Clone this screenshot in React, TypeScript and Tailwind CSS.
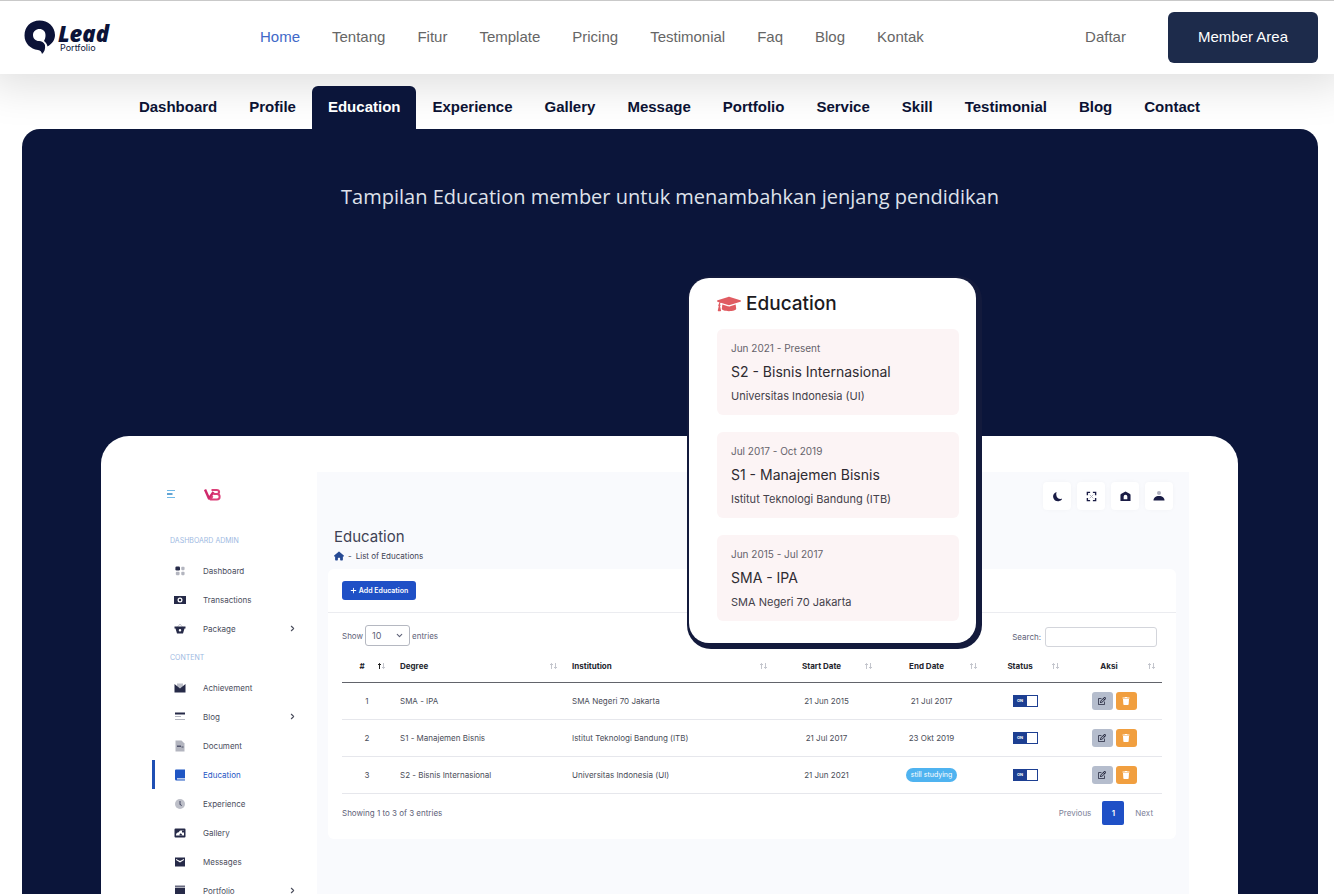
import { useState, type ReactNode } from 'react';
import { FaGraduationCap, FaTrash } from 'react-icons/fa';
import { FaHouse, FaMoon, FaPlus, FaRegPenToSquare } from 'react-icons/fa6';
import { ChevronDown, ChevronRight } from 'lucide-react';
import clsx from 'clsx';

const NAV = ['Home', 'Tentang', 'Fitur', 'Template', 'Pricing', 'Testimonial', 'Faq', 'Blog', 'Kontak'];

const TABS = [
  'Dashboard', 'Profile', 'Education', 'Experience', 'Gallery', 'Message',
  'Portfolio', 'Service', 'Skill', 'Testimonial', 'Blog', 'Contact',
];

const EDUCATION = [
  { date: 'Jun 2021 - Present', title: 'S2 - Bisnis Internasional', place: 'Universitas Indonesia (UI)' },
  { date: 'Jul 2017 - Oct 2019', title: 'S1 - Manajemen Bisnis', place: 'Istitut Teknologi Bandung (ITB)' },
  { date: 'Jun 2015 - Jul 2017', title: 'SMA - IPA', place: 'SMA Negeri 70 Jakarta' },
];

const ROWS = [
  { id: 1, degree: 'SMA - IPA', institution: 'SMA Negeri 70 Jakarta', start: '21 Jun 2015', end: '21 Jul 2017' },
  { id: 2, degree: 'S1 - Manajemen Bisnis', institution: 'Istitut Teknologi Bandung (ITB)', start: '21 Jul 2017', end: '23 Okt 2019' },
  { id: 3, degree: 'S2 - Bisnis Internasional', institution: 'Universitas Indonesia (UI)', start: '21 Jun 2021', end: null },
];

const COLUMNS = [
  { label: '#', width: 'w-[50px]', center: true, sorted: true },
  { label: 'Degree', width: 'w-[172px]' },
  { label: 'Institution', width: 'w-auto' },
  { label: 'Start Date', width: 'w-[105px]', center: true },
  { label: 'End Date', width: 'w-[105px]', center: true },
  { label: 'Status', width: 'w-[82px]', center: true },
  { label: 'Aksi', width: 'w-[96px]', center: true },
];

function Icon({ children, className = 'size-3' }: { children: ReactNode; className?: string }) {
  return (
    <svg viewBox="0 0 24 24" fill="currentColor" className={className} aria-hidden="true">
      {children}
    </svg>
  );
}

const icons: Record<string, ReactNode> = {
  Dashboard: (
    <Icon className="size-[10px]">
      <rect x="1" y="1" width="11" height="10" rx="3" />
      <rect x="15" y="2" width="8" height="8" rx="2" opacity=".35" />
      <rect x="2" y="14" width="9" height="8" rx="2" opacity=".35" />
      <rect x="15" y="14" width="8" height="8" rx="2" opacity=".35" />
    </Icon>
  ),
  Transactions: (
    <Icon>
      <path fillRule="evenodd" d="M0 4h24v16H0zM12 7a5 5 0 1 0 0 10 5 5 0 0 0 0-10z" />
      <circle cx="12" cy="12" r="2.5" />
    </Icon>
  ),
  Package: (
    <Icon>
      <path d="M6 9 12 2l6 7" fill="none" stroke="currentColor" strokeWidth="1.5" opacity=".35" />
      <path fillRule="evenodd" d="M1 7h22v4h-2l-3 10H6L3 11H1zM12 12a2.500 2.500 0 1 0 0 5 2.500 2.500 0 0 0 0-5z" />
    </Icon>
  ),
  Achievement: (
    <Icon>
      <path d="M6 3h12v7l-6 5-6-5z" opacity=".3" />
      <path d="m1 4 11 9 11-9v17H1z" />
    </Icon>
  ),
  Blog: (
    <Icon>
      <rect x="2" y="3" width="20" height="4" />
      <rect x="2" y="10" width="12" height="2" opacity=".35" />
      <rect x="2" y="16" width="20" height="2" opacity=".35" />
    </Icon>
  ),
  Document: (
    <Icon>
      <path d="M3 1h12l6 6v16H3z" opacity=".35" />
      <path d="M6 11h8v3H6zM15 13h4v2h-4z" opacity=".7" />
    </Icon>
  ),
  Education: (
    <Icon>
      <path fillRule="evenodd" d="M4 1h18v17H6v3h16v2H5a3 3 0 0 1-3-3V3a2 2 0 0 1 2-2z" />
      <path d="M6 18h16v3H6z" opacity=".3" />
    </Icon>
  ),
  Experience: (
    <Icon>
      <circle cx="12" cy="12" r="10" opacity=".3" />
      <path d="M11 6h2v6l3 3-1 1-4-3z" opacity=".8" />
    </Icon>
  ),
  Gallery: (
    <Icon>
      <path fillRule="evenodd" d="M3 3h18a2 2 0 0 1 2 2v14a2 2 0 0 1-2 2H3a2 2 0 0 1-2-2V5a2 2 0 0 1 2-2zm10 4c-2 0-3 4-5 4-3 0-4 3-4 6h16V7z" />
      <path d="M11 17c0-4 2-5 4-3l2 3zM16 7h5v4h-5z" />
    </Icon>
  ),
  Messages: (
    <Icon>
      <path fillRule="evenodd" d="M2 3h20v18H2zm2 3v2l8 5 8-5V6l-8 4z" />
    </Icon>
  ),
  Portfolio: (
    <Icon>
      <path d="M2 6h20v17H2z" />
      <path d="M2 1h20v4H2z" opacity=".7" />
    </Icon>
  ),
};

function SideItem({ label, active, expandable }: { label: string; active?: boolean; expandable?: boolean }) {
  return (
    <li>
      <a
        href="#"
        className={clsx(
          'flex h-[29px] items-center border-l-[3px] pr-5 pl-[18px]',
          active ? 'border-[#1f4fb4] text-[#1f56c4]' : 'border-transparent text-[#4a4d5c]'
        )}
      >
        <span className={clsx('mr-4 flex w-[14px] justify-center', !active && 'text-[#262a48]')}>{icons[label]}</span>
        {label}
        {expandable && <ChevronRight className="ml-auto size-[9px]" strokeWidth={3} />}
      </a>
    </li>
  );
}

function SortIcon({ sorted }: { sorted?: boolean }) {
  return (
    <svg viewBox="0 0 18 14" fill="none" strokeWidth="2" className="absolute top-1/2 right-[6px] h-[7px] w-[9px] -translate-y-1/2" aria-hidden="true">
      <path d="M5 13V2M2 5l3-3 3 3" className={sorted ? 'stroke-[#222]' : 'stroke-[#c3c5cc]'} />
      <path d="M13 1v11M10 9l3 3 3-3" className="stroke-[#c3c5cc]" />
    </svg>
  );
}

function Logo() {
  return (
    <a href="#" className="flex w-[94px] items-center gap-[3px] text-[#0c1338]">
      <svg viewBox="0 0 62 70" className="ml-[2px] h-[35px] w-[31px] shrink-0" aria-hidden="true">
        <path
          fill="currentColor"
          d="M31 1C13 1 1 14 1 31c0 16 12 27 27 29 5 1 7 3 8 8 5-4 7-10 6-18-2-5-7-8-12-8-7 0-12-5-12-12s6-12 13-12 12 5 12 12c0 5-1 8-3 12 4 3 6 6 7 11 9-5 15-13 15-23C62 13 48 1 31 1z"
        />
      </svg>
      <span className="flex flex-col">
        <span className="font-['Open_Sans'] text-[22px] leading-5 font-extrabold italic">Lead</span>
        <span className="pl-[2px] font-['Inter'] text-[9px] leading-[10px]">Portfolio</span>
      </span>
    </a>
  );
}

function Header() {
  return (
    <header className="relative z-10 flex h-[74px] shrink-0 items-center border-t border-[#c9c9c9] bg-white pr-4 pl-[22px] text-[15px] text-[#666] shadow-[0_0_44px_12px_rgba(0,0,0,0.13)]">
      <Logo />
      <nav className="ml-32 flex">
        {NAV.map((item) => (
          <a key={item} href="#" className={clsx('px-4', item === 'Home' && 'text-[#4169c8]')}>
            {item}
          </a>
        ))}
      </nav>
      <a href="#" className="ml-auto">Daftar</a>
      <button className="ml-[42px] h-[51px] rounded-md bg-[#1d2b4b] px-[30px] text-white">Member Area</button>
    </header>
  );
}

function EducationCard() {
  return (
    <aside className="absolute -top-[158px] right-[262px] z-10 w-[287px] rounded-[20px] bg-white px-[17px] pt-[13px] pb-[22px] pl-7 text-[#2e2b31] shadow-[2px_2px_0_4px_#131a3c]">
      <h2 className="mb-3 flex h-[26px] items-center gap-[5px] text-[19px] font-medium text-[#1c1a20]">
        <FaGraduationCap className="size-6 text-[#e05c62]" />
        Education
      </h2>
      <ul className="space-y-[17px]">
        {EDUCATION.map((item) => (
          <li key={item.title} className="rounded-md bg-[#fcf4f5] px-[14px] py-[7px] leading-6">
            <p className="text-[10px] text-[#66636b]">{item.date}</p>
            <h3 className="text-[14px]">{item.title}</h3>
            <p className="text-[11px] text-[#44414a]">{item.place}</p>
          </li>
        ))}
      </ul>
    </aside>
  );
}

function Sidebar() {
  return (
    <div className="w-[165px] shrink-0 bg-white">
      <div className="flex h-11 items-center pl-[14px]">
        <svg viewBox="0 0 20 20" className="size-[10px]" aria-hidden="true">
          <path d="M2 3h16M2 17h16" stroke="#6fb9e8" strokeWidth="2" />
          <path d="M2 10h11" stroke="#2f86c4" strokeWidth="3" />
        </svg>
        <svg viewBox="0 0 34 26" className="ml-7 h-[13px] w-[17px]" fill="none" strokeWidth="5" strokeLinejoin="round" aria-hidden="true">
          <path d="m2 3 8 18L19 8" stroke="#cf2a6c" />
          <path d="M15 4h10c7 0 7 8 0 8h-5 6c7 0 7 11 0 11H13l4-7" stroke="#dc3f78" strokeWidth="4" />
        </svg>
      </div>
      <h4 className="mt-[9px] flex h-[31px] items-center pl-[18px] text-[7px] text-[#9db9e2]">DASHBOARD ADMIN</h4>
      <ul>
        <SideItem label="Dashboard" />
        <SideItem label="Transactions" />
        <SideItem label="Package" expandable />
      </ul>
      <h4 className="flex h-[30px] items-center pl-[18px] text-[7px] text-[#9db9e2]">CONTENT</h4>
      <ul>
        <SideItem label="Achievement" />
        <SideItem label="Blog" expandable />
        <SideItem label="Document" />
        <SideItem label="Education" active />
        <SideItem label="Experience" />
        <SideItem label="Gallery" />
        <SideItem label="Messages" />
        <SideItem label="Portfolio" expandable />
      </ul>
    </div>
  );
}

function Toggle({ id }: { id: number }) {
  const [on, setOn] = useState(true);

  return (
    <label className="inline-flex h-3 w-[25px] items-center bg-[#1d3f92] p-px align-middle">
      <input type="checkbox" checked={on} onChange={() => setOn(!on)} className="sr-only" aria-label={`Status ${id}`} />
      <span className="w-[13px] text-center text-[4px] font-bold text-white">{on ? 'ON' : 'OFF'}</span>
      <span className="h-[10px] flex-1 bg-white" />
    </label>
  );
}

function Topbar() {
  const button = 'flex size-7 items-center justify-center rounded bg-white text-[#1a1c45] shadow-[0_0_4px_rgba(0,0,0,0.03)]';

  return (
    <div className="flex justify-end gap-[6px] pt-[10px] pr-4">
      <button className={button} aria-label="Dark mode">
        <Icon className="size-[11px]">
          <path d="M10 2C4 4 1 9 3 15c2 7 11 10 18 4l1-2c-9 2-15-5-12-15z" />
        </Icon>
      </button>
      <button className={button} aria-label="Fullscreen">
        <Icon className="size-[11px]">
          <path d="M3 9V3h6M15 3h6v6M21 15v6h-6M9 21H3v-6" fill="none" stroke="currentColor" strokeWidth="3" />
          <path d="m8 8 8 8M16 8l-8 8" stroke="currentColor" strokeWidth="2" opacity=".35" />
        </Icon>
      </button>
      <button className={button} aria-label="Home">
        <Icon className="size-[11px]">
          <path fillRule="evenodd" d="M12 1 3 6a3 3 0 0 0-2 3v13h22V9a3 3 0 0 0-2-3zM8 12v6h8v-6a4 4 0 0 0-8 0z" />
        </Icon>
      </button>
      <button className={button} aria-label="Account">
        <Icon>
          <circle cx="12" cy="6" r="4" opacity=".35" />
          <path d="M1 21c0-5 4-9 11-9s11 4 11 9z" />
        </Icon>
      </button>
    </div>
  );
}

function EducationTable() {
  return (
    <table className="mt-[4px] w-full table-fixed text-[8px] text-[#4a4d58]">
      <thead>
        <tr className="h-[31px] border-b border-[#62646b] text-[#25262e]">
          {COLUMNS.map((col) => (
            <th
              key={col.label}
              className={clsx('relative pr-[18px] pl-2 font-bold', col.width, col.center ? 'text-center' : 'text-left')}
            >
              {col.label}
              <SortIcon sorted={col.sorted} />
            </th>
          ))}
        </tr>
      </thead>
      <tbody>
        {ROWS.map((row) => (
          <tr key={row.id} className="h-[37px] border-b border-[#e6e7ec]">
            <td className="text-center">{row.id}</td>
            <td className="px-2">{row.degree}</td>
            <td className="px-2">{row.institution}</td>
            <td className="text-center">{row.start}</td>
            <td className="text-center">
              {row.end ?? (
                <span className="inline-block rounded-full bg-[#4fb3f0] px-[5px] text-[7px] leading-[14px] text-white">still studying</span>
              )}
            </td>
            <td className="text-center">
              <Toggle id={row.id} />
            </td>
            <td>
              <div className="flex justify-center gap-[3px]">
                <button className="flex h-[18px] w-[21px] items-center justify-center rounded-[3px] bg-[#b5bdcd] text-[#23263c]" aria-label="Edit">
                  <FaRegPenToSquare className="size-2" />
                </button>
                <button className="flex h-[18px] w-[21px] items-center justify-center rounded-[3px] bg-[#f19f3f] text-white" aria-label="Delete">
                  <FaTrash className="size-2" />
                </button>
              </div>
            </td>
          </tr>
        ))}
      </tbody>
    </table>
  );
}

function Content() {
  return (
    <main className="flex-1 bg-[#f9fafd]">
      <Topbar />
      <div className="px-[11px] pr-[13px]">
        <div className="px-[6px] pt-4">
          <h1 className="text-[15px] leading-[22px] text-[#3f4254]">Education</h1>
          <div className="flex h-4 items-center gap-1 text-[#3f4254]">
            <FaHouse className="size-[10px] text-[#274a94]" />
            <span>-</span>
            <span>List of Educations</span>
          </div>
        </div>

        <div className="mt-[5px] rounded-md bg-white">
          <div className="h-11 border-b border-[#ebecf0] px-[14px] pt-3">
            <button className="flex h-[19px] w-[74px] items-center justify-center gap-[2px] rounded-[3px] bg-[#1f50c6] text-[7px] font-semibold text-white">
              <FaPlus className="size-[7px]" />
              Add Education
            </button>
          </div>

          <div className="px-[14px] pt-[11px] pb-[14px] text-[#5e6278]">
            <div className="flex items-center justify-between pr-[5px]">
              <label className="flex items-center gap-[2px]">
                Show
                <span className="relative">
                  <select className="h-[21px] w-[45px] appearance-none rounded-[3px] border border-[#b5b8c1] bg-white pl-[6px] text-[9px]">
                    <option>10</option>
                    <option>25</option>
                  </select>
                  <ChevronDown className="pointer-events-none absolute top-[6px] right-[6px] size-[9px]" strokeWidth={3} />
                </span>
                entries
              </label>
              <label className="flex items-center gap-1 pt-[3px]">
                Search:
                <input type="search" className="h-5 w-28 rounded-[3px] border border-[#d3d5db] bg-white px-1" />
              </label>
            </div>

            <EducationTable />

            <div className="flex items-center justify-between pt-[7px] pr-[9px]">
              <p>Showing 1 to 3 of 3 entries</p>
              <div className="flex items-center gap-[11px] text-[#7e8299]">
                <button>Previous</button>
                <button className="h-6 w-[22px] rounded-[2px] bg-[#1f50c6] font-semibold text-white">1</button>
                <button>Next</button>
              </div>
            </div>
          </div>
        </div>
      </div>
    </main>
  );
}

export default function App() {
  const [tab, setTab] = useState('Education');

  return (
    <div className="flex h-screen flex-col overflow-hidden bg-white font-['Liberation_Sans',sans-serif]">
      <Header />

      {/* Member pages */}
      <nav className="relative z-20 flex shrink-0 justify-center pt-3 pl-[5px]">
        {TABS.map((item) => (
          <button
            key={item}
            onClick={() => setTab(item)}
            className={clsx(
              'h-[43px] rounded-t-md px-4 text-[15px] font-bold',
              item === tab ? 'bg-[#0b153a] text-white' : 'text-[#0b1233]'
            )}
          >
            {item}
          </button>
        ))}
      </nav>

      <section className="relative z-20 mr-4 ml-[22px] flex flex-1 flex-col rounded-t-[18px] bg-[#0b153a] pt-[53px]">
        <p className="text-center font-['Open_Sans'] text-[20px] leading-[30px] text-[#dfe2ea]">
          Tampilan Education member untuk menambahkan jenjang pendidikan
        </p>

        <div className="relative mr-20 ml-[79px] mt-56 flex-1 rounded-t-[28px] bg-white pt-9 pr-[49px] pl-[51px] font-['Inter',sans-serif]">
          <EducationCard />
          <div className="flex text-[8px] leading-3">
            <Sidebar />
            <Content />
          </div>
        </div>
      </section>
    </div>
  );
}
